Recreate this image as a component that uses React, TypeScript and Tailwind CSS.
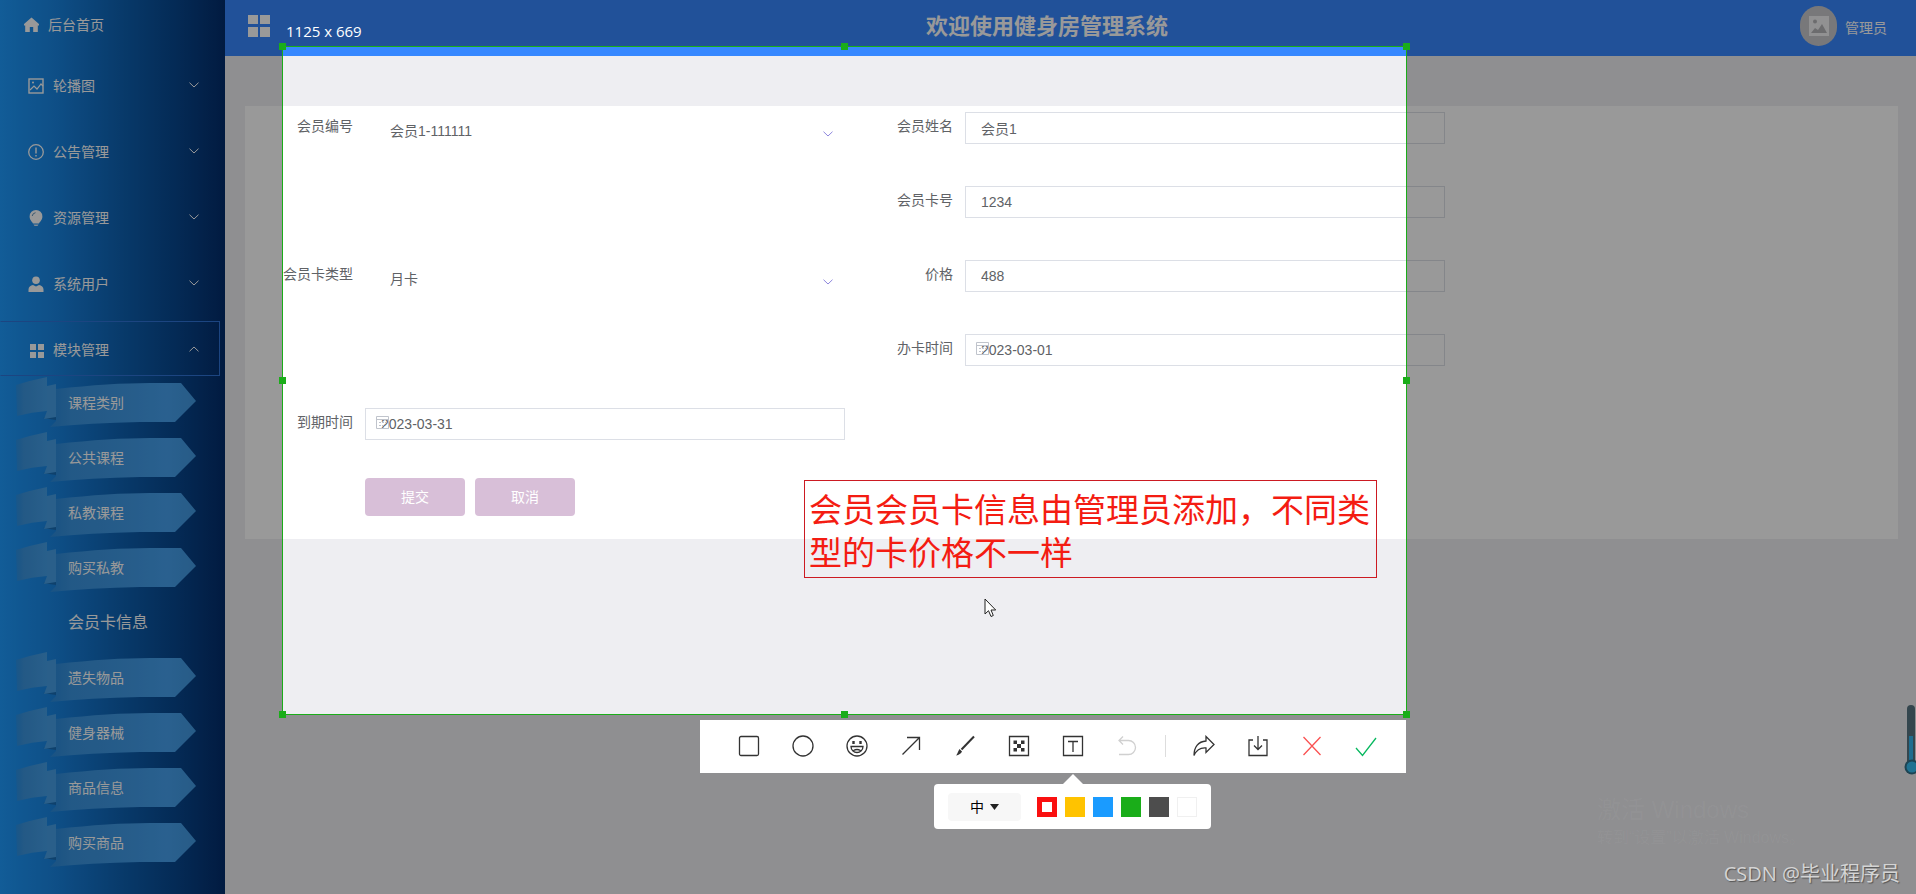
import { useState } from "react";
import type { ReactNode } from "react";

interface FieldProps {
  id: string;
  label: string;
  children: ReactNode;
}

interface SelectFieldProps {
  id: string;
  value: string;
  options: string[];
  onChange: (value: string) => void;
}

const menus = [
  { title: "轮播图", icon: "picture" },
  { title: "公告管理", icon: "warning" },
  { title: "资源管理", icon: "bulb" },
  { title: "系统用户", icon: "user" },
  { title: "模块管理", icon: "grid", open: true },
];

const modules = [
  "课程类别",
  "公共课程",
  "私教课程",
  "购买私教",
  "会员卡信息",
  "遗失物品",
  "健身器械",
  "商品信息",
  "购买商品",
];

const handles = [
  "-left-1 -top-1",
  "left-[558px] -top-1",
  "-right-1 -top-1",
  "-left-1 top-[330px]",
  "-right-1 top-[330px]",
  "-left-1 -bottom-1",
  "left-[558px] -bottom-1",
  "-right-1 -bottom-1",
];

const MenuIcon = ({ name }: { name: string }) => {
  if (name === "picture") {
    return (
      <svg width="16" height="16" viewBox="0 0 16 16" fill="none" stroke="currentColor">
        <rect x="1" y="1" width="14" height="14" strokeWidth="1.4" />
        <path d="M2 12l4-4 3 3 4-5 2 2" strokeWidth="1.2" />
        <circle cx="5" cy="4.5" r="1" fill="currentColor" stroke="none" />
      </svg>
    );
  }
  if (name === "warning") {
    return (
      <svg width="16" height="16" viewBox="0 0 16 16" fill="none" stroke="currentColor">
        <circle cx="8" cy="8" r="7.3" strokeWidth="1.3" />
        <path d="M8 3.5v6M8 11v1.5" strokeWidth="1.4" />
      </svg>
    );
  }
  if (name === "bulb") {
    return (
      <svg width="16" height="18" viewBox="0 0 16 18" fill="currentColor">
        <path d="M8 1a6.400 6.400 0 0 0-6.400 6.400c0 3.600 2.500 5 3.400 7.100h6c.9-2.100 3.400-3.500 3.400-7.100A6.400 6.400 0 0 0 8 1z" />
        <path d="M5.500 15.500h5L9.500 17h-3z" opacity="0.8" />
        <path d="M4.200 7A4 4 0 0 1 7.500 3.700" stroke="#5f93bd" fill="none" />
      </svg>
    );
  }
  if (name === "user") {
    return (
      <svg width="16" height="16" viewBox="0 0 16 16" fill="currentColor">
        <circle cx="8" cy="4.200" r="3.800" />
        <path d="M.5 16v-2.500c0-2.500 2-4.300 4.500-4.500l3 1.500 3-1.500c2.500.2 4.500 2 4.500 4.500V16z" />
      </svg>
    );
  }
  return (
    <svg width="16" height="16" viewBox="0 0 16 16" fill="currentColor">
      <path d="M2 2h6v6H2zM10 2h6v6h-6zM2 10h6v6H2zM10 10h6v6h-6z" />
    </svg>
  );
};

const Chevron = ({ up = false }: { up?: boolean }) => (
  <svg width="10" height="6" viewBox="0 0 10 6" fill="none" stroke="currentColor">
    <path d={up ? "M.5 5.300L5 1l4.500 4.300" : "M.5.7L5 5 9.500.7"} />
  </svg>
);

const Ribbon = () => (
  <svg
    className="absolute inset-0"
    width="200"
    height="55"
    viewBox="0 0 200 55"
    aria-hidden="true"
  >
    <defs>
      <linearGradient id="ribbonBody" x1="0" x2="1" y1="0" y2="0">
        <stop offset="0" stopColor="#3c90d6" stopOpacity="0.5" />
        <stop offset="0.15" stopColor="#4199e2" stopOpacity="0.85" />
        <stop offset="0.8" stopColor="#48a4f2" stopOpacity="0.97" />
        <stop offset="1" stopColor="#4298e0" />
      </linearGradient>
      <linearGradient id="ribbonTail" x1="0" x2="1" y1="0" y2="0">
        <stop offset="0" stopColor="#3c8ed2" stopOpacity="0.4" />
        <stop offset="0.25" stopColor="#3f95dc" stopOpacity="0.9" />
        <stop offset="1" stopColor="#459fe8" />
      </linearGradient>
    </defs>
    <path d="M56 13Q110 7 150 7H181L196 25 175 46H140Q90 47 50 51L56 45Z" fill="url(#ribbonBody)" />
    <path d="M43 42L56 39V44Z" fill="#1a5d96" opacity="0.6" />
    <path d="M47 10L56 8V41L44 43 47 35Z" fill="#469fe6" />
    <path d="M16 9Q32 4 47 1V35Q32 36 17 40Z" fill="url(#ribbonTail)" />
  </svg>
);

const Sidebar = () => (
  <aside className="w-[225px] shrink-0 bg-[linear-gradient(90deg,#1e9afd_0%,#1883e0_25%,#0f66b8_50%,#07458c_80%,#032d6c_100%)] text-sm text-white">
    <a href="#home" className="flex h-[49px] items-center gap-[9px] pl-6">
      <svg width="15" height="15" viewBox="0 0 15 15" fill="currentColor">
        <path d="M7.500.5L0 7v1.500h1.200V15h4.600v-5h3.400v5h4.600V8.500H15V7z" />
      </svg>
      后台首页
    </a>
    <nav className="mt-2">
      <ul className="flex flex-col gap-[11px]">
        {menus.map((menu) => (
          <li key={menu.title}>
            <button
              type="button"
              className={
                menu.open
                  ? "flex h-[55px] w-[220px] items-center border border-[#2f74d8] border-l-transparent pr-5 pl-[27px]"
                  : "flex h-[55px] w-[220px] items-center border border-transparent pr-5 pl-[27px]"
              }
            >
              <span className="flex flex-1 items-center gap-[9px] pt-[2px]">
                <MenuIcon name={menu.icon} />
                {menu.title}
              </span>
              <Chevron up={menu.open} />
            </button>
          </li>
        ))}
      </ul>
      <ul>
        {modules.map((name) => (
          <li key={name} className="relative">
            {name !== "会员卡信息" && <Ribbon />}
            <a
              href="#module"
              className={
                name === "会员卡信息"
                  ? "relative flex h-[55px] items-center pb-[2px] pl-[68px] text-base"
                  : "relative flex h-[55px] items-center pb-[2px] pl-[68px]"
              }
            >
              {name}
            </a>
          </li>
        ))}
      </ul>
    </nav>
  </aside>
);

const Header = () => (
  <header className="flex h-14 items-center bg-[#3788ff] pr-[29px] pb-1 pl-[23px] text-white">
    <button type="button" aria-label="菜单">
      <svg width="22" height="22" viewBox="0 0 22 22" fill="currentColor">
        <path d="M0 0h10v9H0zM12 0h10v9H12zM0 12h10v10H0zM12 12h10v10H12z" />
      </svg>
    </button>
    <h1 className="flex-1 pl-6 text-center text-[22px] font-bold">欢迎使用健身房管理系统</h1>
    <div className="flex items-center gap-2">
      <span className="flex h-10 w-[37px] items-center justify-center rounded-full bg-[#c9c9cc]">
        <svg width="20" height="20" viewBox="0 0 20 20">
          <path d="M0 0h20v20H0z" fill="#f2f2f4" />
          <path d="M2 17l4-5 3 2 4-6 5 9z" fill="#b5b5b8" />
          <circle cx="6" cy="5.500" r="2" fill="#b5b5b8" />
        </svg>
      </span>
      <span className="pt-1 text-sm">管理员</span>
    </div>
  </header>
);

const Field = ({ id, label, children }: FieldProps) => (
  <div className="flex">
    <label htmlFor={id} className="w-[120px] shrink-0 pr-3 text-right leading-7">
      {label}
    </label>
    <div className="relative h-8 w-[480px]">{children}</div>
  </div>
);

const inputStyle = "h-8 w-full border border-[#dcdfe6] px-[15px] outline-none";

const SelectField = ({ id, value, options, onChange }: SelectFieldProps) => (
  <>
    <select
      id={id}
      value={value}
      onChange={(e) => onChange(e.target.value)}
      className="h-[38px] w-full appearance-none px-[25px] outline-none"
    >
      {options.map((option) => (
        <option key={option}>{option}</option>
      ))}
    </select>
    <span className="pointer-events-none absolute top-[19px] right-3 text-[#8d86dd]">
      <Chevron />
    </span>
  </>
);

const CalendarIcon = () => (
  <svg
    className="pointer-events-none absolute top-2 left-[11px] text-[#c0c4cc]"
    width="13"
    height="13"
    viewBox="0 0 13 13"
    fill="none"
    stroke="currentColor"
  >
    <path d="M.5.5h12v12H.5zM.5 3.500h12M3 6.500h2M6 6.500h2M9 6.500h1.500M3 9.500h2M6 9.500h2" />
  </svg>
);

const CardForm = () => {
  const [form, setForm] = useState({
    member: "会员1-111111",
    name: "会员1",
    cardNo: "1234",
    cardType: "月卡",
    price: "488",
    startDate: "2023-03-01",
    endDate: "2023-03-31",
  });

  const update = (key: string, value: string) => setForm({ ...form, [key]: value });

  return (
    <form
      onSubmit={(e) => e.preventDefault()}
      className="mt-[50px] mr-[18px] ml-5 bg-white pt-[6px] pb-[23px] text-sm text-[#606266]"
    >
      <div className="grid grid-cols-[600px_600px] gap-y-[42px]">
        <Field id="member" label="会员编号">
          <SelectField
            id="member"
            value={form.member}
            options={["会员1-111111"]}
            onChange={(value) => update("member", value)}
          />
        </Field>
        <Field id="name" label="会员姓名">
          <input
            id="name"
            className={inputStyle}
            value={form.name}
            onChange={(e) => update("name", e.target.value)}
          />
        </Field>
        <div className="col-start-2">
          <Field id="cardNo" label="会员卡号">
            <input
              id="cardNo"
              className={inputStyle}
              value={form.cardNo}
              onChange={(e) => update("cardNo", e.target.value)}
            />
          </Field>
        </div>
        <Field id="cardType" label="会员卡类型">
          <SelectField
            id="cardType"
            value={form.cardType}
            options={["月卡", "季卡", "年卡"]}
            onChange={(value) => update("cardType", value)}
          />
        </Field>
        <Field id="price" label="价格">
          <input
            id="price"
            className={inputStyle}
            value={form.price}
            onChange={(e) => update("price", e.target.value)}
          />
        </Field>
        <div className="col-start-2">
          <Field id="startDate" label="办卡时间">
            <CalendarIcon />
            <input
              id="startDate"
              className={inputStyle}
              value={form.startDate}
              onChange={(e) => update("startDate", e.target.value)}
            />
          </Field>
        </div>
        <Field id="endDate" label="到期时间">
          <CalendarIcon />
          <input
            id="endDate"
            className={inputStyle}
            value={form.endDate}
            onChange={(e) => update("endDate", e.target.value)}
          />
        </Field>
      </div>
      <div className="mt-[38px] flex gap-[10px] pl-[120px] text-white">
        <button type="submit" className="h-[38px] w-[100px] rounded bg-[#d8bfd8]">
          提交
        </button>
        <button type="button" className="h-[38px] w-[100px] rounded bg-[#d8bfd8]">
          取消
        </button>
      </div>
    </form>
  );
};

const tools = [
  { label: "矩形", d: "M3 1.500h16a1.500 1.500 0 0 1 1.500 1.500v16a1.500 1.500 0 0 1-1.500 1.500H3A1.500 1.500 0 0 1 1.500 19V3A1.500 1.500 0 0 1 3 1.500z" },
  { label: "椭圆", d: "M11 1a10 10 0 1 1 0 20 10 10 0 0 1 0-20z" },
  {
    label: "表情",
    d: "M11 1a10 10 0 1 1 0 20 10 10 0 0 1 0-20zM5 11.500h12a6 6 0 0 1-12 0zM7.500 15.500q3.500-2 7 0",
  },
  { label: "箭头", d: "M2.500 19.500L19.500 2.500M7 2.500h12.500V15" },
  { label: "画笔", d: "M20 1.500L7.500 14.500" },
  { label: "马赛克", d: "M1.500 1.500h19v19h-19z" },
  { label: "文字", d: "M1.500 1.500h19v19h-19zM6 6.500h10M11 6.500V17" },
  { label: "撤销", d: "M7 1.500L3 5.500l4 4M3 5.500h9.500a7 7 0 0 1 0 14H3" },
];

const actions = [
  {
    label: "分享",
    d: "M13 1.500L21 9.500l-8 8V13C7.500 12.500 3.500 15 1 20.500 1 12.500 5 6.500 13 6z",
    color: "text-[#333333]",
  },
  { label: "保存", d: "M6 5H2v15.500h18V5h-4M11 1v13.500M7 10.500l4 4 4-4", color: "text-[#333333]" },
  { label: "关闭", d: "M2.500 2l17 18M19.500 2l-17 18", color: "text-[#fa5151]" },
  { label: "完成", d: "M1 13l6.500 7.500L21 3", color: "text-[#07b85f]" },
];

const ToolIcon = ({ label, d }: { label: string; d: string }) => (
  <svg width="22" height="22" viewBox="0 0 22 22" fill="none" stroke="currentColor" strokeWidth="1.300">
    <path d={d} strokeWidth={label === "画笔" ? 2 : undefined} />
    {label === "画笔" && (
      <path d="M5.500 14l2.500 2.500c-1 2-3 3.500-6 4 1.500-1.500 2-4.500 3.500-6.500z" fill="currentColor" stroke="none" />
    )}
    {label === "表情" && (
      <path
        d="M6.300 6h2.400v3H6.300zM13.300 6h2.400v3h-2.400z"
        fill="currentColor"
        stroke="none"
      />
    )}
    {label === "马赛克" && (
      <path
        d="M5.500 5.500H9V9H5.500zM13 5.500h3.500V9H13zM9 9h4v4H9zM5.500 13H9v3.500H5.500zM13 13h3.500v3.500H13z"
        fill="currentColor"
        stroke="none"
      />
    )}
  </svg>
);

const Toolbar = () => (
  <div className="absolute top-[720px] left-[700px] flex h-[53px] w-[706px] items-center bg-white pb-[2px] pl-[22px]">
    {tools.map((tool) => (
      <button
        key={tool.label}
        type="button"
        aria-label={tool.label}
        className={
          tool.label === "撤销"
            ? "flex w-[54px] justify-center text-[#d0d0d0]"
            : "flex w-[54px] justify-center text-[#333333]"
        }
      >
        <ToolIcon label={tool.label} d={tool.d} />
      </button>
    ))}
    <span className="mx-[11px] h-[22px] w-px bg-[#dddddd]" />
    {actions.map((action) => (
      <button
        key={action.label}
        type="button"
        aria-label={action.label}
        className={`flex w-[54px] justify-center ${action.color}`}
      >
        <ToolIcon label={action.label} d={action.d} />
      </button>
    ))}
  </div>
);

const TextOptions = () => (
  <div className="absolute top-[774px] left-[934px] w-[277px]">
    <svg className="mx-auto block" width="20" height="10" viewBox="0 0 20 10" fill="#ffffff">
      <path d="M10 0l10 10H0z" />
    </svg>
    <div className="flex h-[45px] items-center gap-2 rounded bg-white pl-[14px]">
      <button
        type="button"
        className="mr-2 flex h-7 w-[73px] items-center justify-center gap-[6px] rounded bg-[#f7f7f7] text-sm text-black"
      >
        中
        <svg width="9" height="6" viewBox="0 0 9 6" fill="#222222">
          <path d="M0 0h9L4.500 6z" />
        </svg>
      </button>
      <button type="button" aria-label="红色" className="size-5 border-[5px] border-[#fa1010] bg-white" />
      <button type="button" aria-label="黄色" className="size-5 bg-[#ffc300]" />
      <button type="button" aria-label="蓝色" className="size-5 bg-[#1a9bff]" />
      <button type="button" aria-label="绿色" className="size-5 bg-[#1aad19]" />
      <button type="button" aria-label="灰色" className="size-5 bg-[#4d4d4d]" />
      <button type="button" aria-label="白色" className="size-5 border border-[#f0f0f0] bg-white" />
    </div>
  </div>
);

// Everything outside the selected area is darkened by the selection's own shadow
const Capture = () => (
  <div className="absolute inset-0 overflow-hidden">
    <div className="absolute top-[46px] left-[282px] h-[669px] w-[1125px] border border-[#1aad19] shadow-[0_0_0_2000px_rgba(0,0,0,0.4)]">
      {handles.map((place) => (
        <span key={place} className={`absolute size-[7px] bg-[#1aad19] ${place}`} />
      ))}
    </div>
    <p className="absolute top-5 left-[286px] font-['Open_Sans'] text-[15px] leading-[22px] text-white">
      1125 x 669
    </p>
    <p className="absolute top-[480px] left-[804px] h-[98px] w-[573px] border border-[#cc1a22] px-1 py-2 text-[33px] leading-[43px] text-[#f41c12]">
      会员会员卡信息由管理员添加，不同类型的卡价格不一样
    </p>
    <svg className="absolute top-[598px] left-[984px]" width="13" height="20" viewBox="0 0 13 20">
      <path d="M1 1v15l3.500-3.300L7 18.500l2.300-1L7 12h4.700z" fill="#ffffff" stroke="#222222" />
    </svg>
    <Toolbar />
    <TextOptions />
  </div>
);

const Thermometer = () => (
  <svg className="absolute top-[704px] right-0" width="12" height="72" viewBox="0 0 12 72">
    <rect x="3" y="1" width="8" height="62" rx="4" fill="#34464e" />
    <path d="M5 32h4v30H5z" fill="#1f6d8f" />
    <circle cx="8" cy="63" r="7.500" fill="#1d4453" />
    <circle cx="8" cy="63" r="5.500" fill="#1f7292" />
  </svg>
);

const App = () => {
  return (
    <div className="relative flex min-h-screen overflow-hidden bg-[#eeeef2] font-['Liberation_Sans','Noto_Sans_CJK_SC',sans-serif]">
      <Sidebar />
      <main className="min-w-0 flex-1">
        <Header />
        <CardForm />
      </main>
      <Capture />
      <Thermometer />
      <div className="absolute right-[94px] bottom-11 w-[225px] text-white/4">
        <p className="text-2xl">激活 Windows</p>
        <p className="text-base">转到“设置”以激活 Windows。</p>
      </div>
      <p className="absolute right-4 bottom-[6px] font-['Open_Sans','Noto_Sans_CJK_SC',sans-serif] text-xl text-[#d4d4d4] [text-shadow:1px_1px_1px_#555555]">
        CSDN @毕业程序员
      </p>
    </div>
  );
};

export default App;
